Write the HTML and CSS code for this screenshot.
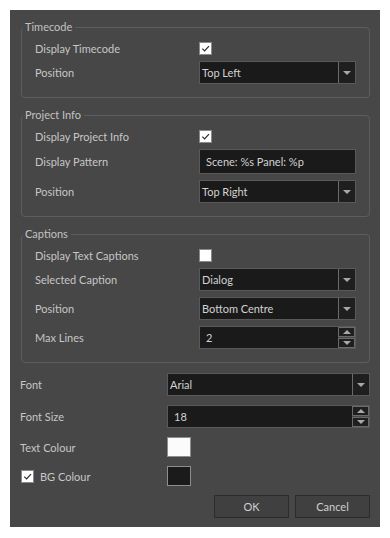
FILE: index.html
```html
<!DOCTYPE html>
<html>
<head>
<meta charset="utf-8">
<link rel="stylesheet" href="styles.css">
</head>
<body>
<div class="dialog">
  <fieldset class="group">
    <legend>Timecode</legend>
    <div class="row row-check"><span class="label">Display Timecode</span><span class="check checked"><svg viewBox="0 0 12 12"><path d="M2.5 6.2 L5 8.6 L9.8 3.4"/></svg></span></div>
    <div class="row"><span class="label">Position</span><div class="combo"><span class="value">Top Left</span><span class="arrow"><i class="tri-down"></i></span></div></div>
  </fieldset>

  <fieldset class="group">
    <legend>Project Info</legend>
    <div class="row row-check"><span class="label">Display Project Info</span><span class="check checked"><svg viewBox="0 0 12 12"><path d="M2.5 6.2 L5 8.6 L9.8 3.4"/></svg></span></div>
    <div class="row row-tall"><span class="label">Display Pattern</span><div class="field field-tall"><span class="value pad">Scene: %s Panel: %p</span></div></div>
    <div class="row"><span class="label">Position</span><div class="combo"><span class="value">Top Right</span><span class="arrow"><i class="tri-down"></i></span></div></div>
  </fieldset>

  <fieldset class="group">
    <legend>Captions</legend>
    <div class="row row-check"><span class="label">Display Text Captions</span><span class="check"></span></div>
    <div class="row"><span class="label">Selected Caption</span><div class="combo"><span class="value">Dialog</span><span class="arrow"><i class="tri-down"></i></span></div></div>
    <div class="row"><span class="label">Position</span><div class="combo"><span class="value">Bottom Centre</span><span class="arrow"><i class="tri-down"></i></span></div></div>
    <div class="row"><span class="label">Max Lines</span><div class="spin"><span class="value pad">2</span><span class="spin-btns"><span class="sbtn"><i class="tri-up"></i></span><span class="sbtn"><i class="tri-down"></i></span></span></div></div>
  </fieldset>

  <div class="form">
    <span class="flabel">Font</span>
    <div class="combo"><span class="value">Arial</span><span class="arrow"><i class="tri-down"></i></span></div>
    <span class="flabel">Font Size</span>
    <div class="spin"><span class="value pad">18</span><span class="spin-btns"><span class="sbtn"><i class="tri-up"></i></span><span class="sbtn"><i class="tri-down"></i></span></span></div>
    <span class="flabel">Text Colour</span>
    <span class="swatch swatch-white"></span>
    <span class="flabel check-label"><span class="check checked"><svg viewBox="0 0 12 12"><path d="M2.5 6.2 L5 8.6 L9.8 3.4"/></svg></span>BG Colour</span>
    <span class="swatch swatch-dark"></span>
  </div>

  <div class="buttons">
    <button class="btn">OK</button>
    <button class="btn">Cancel</button>
  </div>
</div>
</body>
</html>
```

FILE: styles.css
```css
html, body {
  margin: 0;
  padding: 0;
  background: #ffffff;
}

body {
  font-family: Lato, "Noto Sans", sans-serif;
  font-size: 11px;
  color: #c6c6c6;
}

.dialog {
  margin: 10px;
  width: 370px;
  height: 517px;
  box-sizing: border-box;
  background: #474747;
  padding: 10px 10px 0 10px;
  display: flex;
  flex-direction: column;
}

.group {
  margin: 0 0 10px 1px;
  padding: 8px 13px 13px 13px;
  border: 1px solid #5d5d5d;
  border-radius: 4px;
  min-width: 0;
  display: flex;
  flex-direction: column;
  gap: 6px;
}

.group legend {
  padding: 0 3px 0 2px;
  margin-left: -12px;
  height: 14px;
  line-height: 14px;
  color: #c2c2c2;
}

.row {
  display: grid;
  grid-template-columns: 164px 157px;
  align-items: center;
  height: 23px;
}

.row-check {
  height: 13px;
}

.row-tall {
  height: 25px;
}

.label {
  white-space: nowrap;
}

.check {
  width: 11px;
  height: 11px;
  background: #ffffff;
  border: 1px solid #8a8a8a;
  display: inline-flex;
}

.check svg {
  width: 11px;
  height: 11px;
  fill: none;
  stroke: #2a2a2a;
  stroke-width: 1.3;
}

.combo, .field, .spin {
  box-sizing: border-box;
  height: 23px;
  background: #1a1a1a;
  border: 1px solid #595959;
  display: flex;
  align-items: stretch;
  color: #d2d2d2;
}

.field-tall {
  height: 25px;
}

.value {
  flex: 1;
  display: flex;
  align-items: center;
  padding-left: 2px;
  white-space: nowrap;
}

.value.pad {
  padding-left: 6px;
}

.arrow {
  width: 16px;
  border-left: 1px solid #6a6a6a;
  background: #1f1f1f;
  display: flex;
  align-items: center;
  justify-content: center;
}

.tri-down, .tri-up {
  width: 0;
  height: 0;
  border-left: 4px solid transparent;
  border-right: 4px solid transparent;
}

.tri-down {
  border-top: 4px solid #a8a8a8;
}

.tri-up {
  border-bottom: 4px solid #a8a8a8;
}

.spin-btns {
  width: 17px;
  display: flex;
  flex-direction: column;
  gap: 1px;
  background: #474747;
}

.sbtn {
  flex: 1;
  border: 1px solid #6a6a6a;
  background: #1f1f1f;
  display: flex;
  align-items: center;
  justify-content: center;
}

.form {
  margin-top: 0;
  display: grid;
  grid-template-columns: 147px 203px;
  grid-template-rows: 23px 23px 20px 20px;
  row-gap: 9px;
  align-items: center;
}

.form .combo, .form .spin {
  height: 23px;
}

.flabel {
  white-space: nowrap;
}

.check-label {
  display: flex;
  align-items: center;
  gap: 6px;
  margin-left: 1px;
}

.swatch {
  box-sizing: border-box;
  width: 24px;
  height: 20px;
  border: 1px solid #8e8e8e;
}

.swatch-white {
  background: #fbfbfb;
}

.swatch-dark {
  background: #1b1b1b;
}

.buttons {
  margin-top: 9px;
  display: flex;
  justify-content: flex-end;
  gap: 6px;
}

.btn {
  box-sizing: border-box;
  width: 75px;
  height: 23px;
  background: #404040;
  border: 1px solid #2c2c2c;
  color: #cfcfcf;
  font-family: Lato, "Noto Sans", sans-serif;
  font-size: 11px;
  padding: 0;
}
```
